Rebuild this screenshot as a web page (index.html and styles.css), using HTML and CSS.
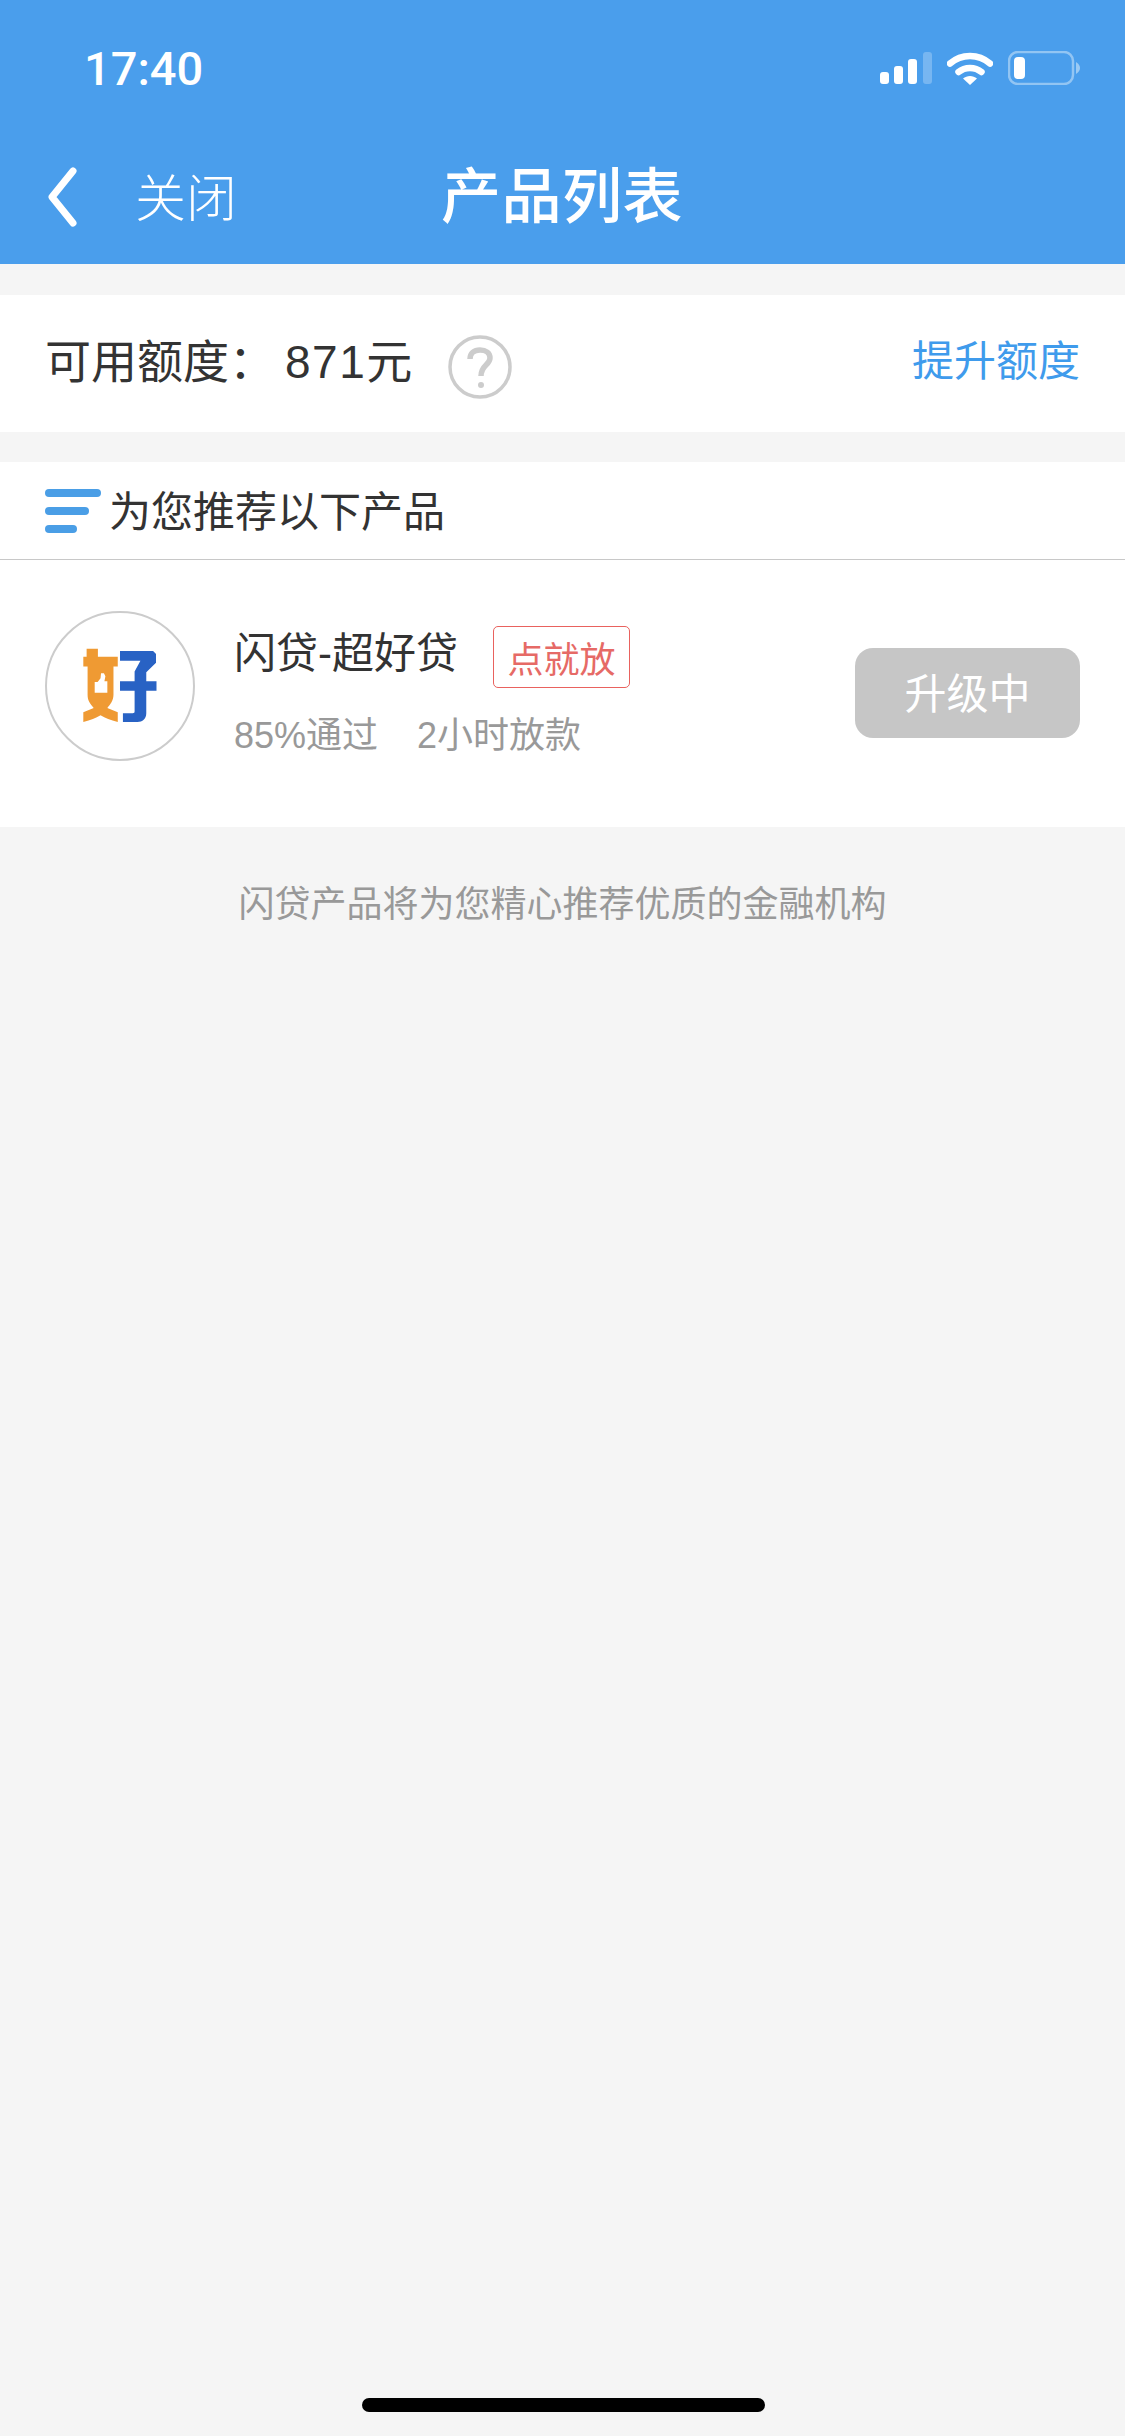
FILE: index.html
```html
<!DOCTYPE html>
<html lang="zh-CN">
<head>
    <meta charset="UTF-8">
    <meta name="viewport" content="width=device-width, initial-scale=1.0">
    <title>产品列表</title>
    <link rel="stylesheet" href="styles.css">
</head>
<body>
    <header class="top">
        <div class="status-bar">
            <span class="time">17:40</span>
            <div class="status-icons">
                <svg class="signal" width="52" height="33" viewBox="0 0 52 33">
                    <rect x="0" y="20" width="9" height="12" rx="3" fill="#fff"/>
                    <rect x="14" y="14" width="9" height="18" rx="3" fill="#fff"/>
                    <rect x="28" y="7" width="9" height="25" rx="3" fill="#fff"/>
                    <rect x="43" y="0" width="9" height="32" rx="3" fill="#fff" opacity="0.25"/>
                </svg>
                <svg class="wifi" width="46" height="34" viewBox="0 0 46 34">
                    <path d="M3 12.500C14.500 2.500 31.500 2.500 43 12.500" fill="none" stroke="#fff" stroke-width="6.500" stroke-linecap="round"/>
                    <path d="M11.500 21C18 15.500 28 15.500 34.500 21" fill="none" stroke="#fff" stroke-width="6.500" stroke-linecap="round"/>
                    <path d="M16 27.500C20 24 26 24 30 27.500L23 34Z" fill="#fff"/>
                </svg>
                <svg class="battery" width="72" height="34" viewBox="0 0 72 34">
                    <rect x="1" y="1" width="64" height="32" rx="9" fill="none" stroke="#fff" stroke-opacity="0.4" stroke-width="2.500"/>
                    <rect x="6" y="6" width="11" height="22" rx="4" fill="#fff"/>
                    <path d="M68 11C71 13 72 15 72 17C72 19 71 21 68 23Z" fill="#fff" fill-opacity="0.45"/>
                </svg>
            </div>
        </div>
        <nav class="nav-bar">
            <div class="nav-left">
                <svg class="back" width="30" height="60" viewBox="0 0 30 60">
                    <path d="M26 4L5 30L26 56" fill="none" stroke="#fff" stroke-width="7" stroke-linecap="round" stroke-linejoin="round"/>
                </svg>
                <span class="close">关闭</span>
            </div>
            <h1 class="title">产品列表</h1>
            <div></div>
        </nav>
    </header>

    <section class="quota card">
        <div class="quota-left">
            <span class="quota-text">可用额度：<span class="quota-num">871元</span></span>
            <svg class="help" width="64" height="64" viewBox="0 0 64 64">
                <circle cx="32" cy="32" r="30" fill="none" stroke="#ccc" stroke-width="3.500"/>
                <path d="M22 24C22 18 26 15 32 15C38 15 42 18 42 23C42 30 33 30 33 41" fill="none" stroke="#ccc" stroke-width="5.500"/>
                <circle cx="33" cy="50" r="3" fill="#ccc"/>
            </svg>
        </div>
        <a class="raise">提升额度</a>
    </section>

    <section class="products card">
        <div class="products-head">
            <svg class="list-icon" width="56" height="44" viewBox="0 0 56 44">
                <rect x="0" y="0" width="56" height="8" rx="4" fill="#4a9ee6"/>
                <rect x="0" y="18" width="44" height="8" rx="4" fill="#4a9ee6"/>
                <rect x="0" y="36" width="32" height="8" rx="4" fill="#4a9ee6"/>
            </svg>
            <h2 class="products-title">为您推荐以下产品</h2>
        </div>
        <div class="product">
            <div class="logo">
                <svg width="150" height="150" viewBox="0 0 150 150">
                    <path d="M40.700 36.700H52.300V45H72.700V55H68.300V84C68.300 90 65 94 62 97.500L72.700 102V112C65 110 60 108 55 105C50 108 45 110 37.300 112V102L48 97.500C44 93 41.700 90 41.700 84V55H37.300V45H40.700Z" fill="#ef9a33"/>
                    <path d="M49 71H52L55 67L55.500 62H58.500L60 65L59 70H62V82H49Z" fill="#fff"/>
                    <path d="M75 39H109L112 42V51L102 61V70H112.500V80H102V103C102 109 98 112 93 112H78V103H88C89.500 103 90 102.500 90 101V80H75V70H90V60L96 49H75Z" fill="#2862c4"/>
                </svg>
            </div>
            <div class="product-info">
                <div class="product-name-row">
                    <span class="product-name">闪贷-超好贷</span>
                    <span class="tag">点就放</span>
                </div>
                <div class="product-meta">
                    <span>85%通过</span>
                    <span>2小时放款</span>
                </div>
            </div>
            <button class="upgrade">升级中</button>
        </div>
    </section>

    <p class="note">闪贷产品将为您精心推荐优质的金融机构</p>

    <div class="home-indicator"></div>
</body>
</html>
```

FILE: styles.css
```css
* {
    box-sizing: border-box;
}

html, body {
    height: 100%;
}

body {
    margin: 0;
    background: #f5f5f5;
    color: #333;
    font-family: "Liberation Sans", "Noto Sans CJK SC", sans-serif;
    display: flex;
    flex-direction: column;
    position: relative;
}

.top {
    background: #4a9eec;
    color: #fff;
    height: 264px;
}

.status-bar {
    height: 136px;
    display: flex;
    align-items: center;
    justify-content: space-between;
    padding: 0 45px 0 84px;
}

.time {
    font-family: Roboto, sans-serif;
    font-size: 47px;
    font-weight: 500;
}

.status-icons {
    display: flex;
    align-items: center;
    gap: 15px;
}

.nav-bar {
    height: 122px;
    display: grid;
    grid-template-columns: 1fr auto 1fr;
    align-items: center;
    padding: 0 45px 0 47px;
}

.nav-left {
    display: flex;
    align-items: center;
    gap: 58px;
}

.close {
    font-size: 51px;
    font-weight: 300;
    margin-bottom: 5px;
}

.title {
    margin: 0 3px 12px 0;
    font-size: 60px;
    font-weight: 500;
    letter-spacing: 0.5px;
}

.card {
    background: #fff;
}

.quota {
    margin-top: 31px;
    height: 137px;
    display: flex;
    align-items: center;
    justify-content: space-between;
    padding: 0 45px 0 45px;
}

.quota-left {
    display: flex;
    align-items: center;
    gap: 34px;
}

.quota-text {
    font-size: 46px;
    margin-bottom: 12px;
}

.quota-num {
    letter-spacing: 1.500px;
    margin-left: 10px;
}

.help {
    margin-top: 6px;
}

.raise {
    color: #3f9bec;
    font-size: 42px;
    margin-bottom: 12px;
}

.products {
    margin-top: 30px;
}

.products-head {
    height: 98px;
    display: flex;
    align-items: center;
    gap: 8px;
    padding-left: 45px;
    border-bottom: 1px solid #c8c8c8;
}

.products-title {
    margin: 0 0 5px;
    font-size: 42px;
    font-weight: 400;
}

.product {
    height: 267px;
    display: flex;
    align-items: center;
    padding: 0 45px;
}

.logo {
    width: 150px;
    height: 150px;
    border: 2px solid #ccc;
    border-radius: 50%;
    overflow: hidden;
    flex: none;
    margin-top: -16px;
    display: flex;
    align-items: center;
    justify-content: center;
}

.product-info {
    flex: 1;
    margin-left: 39px;
    margin-top: -10px;
}

.product-name-row {
    display: flex;
    align-items: center;
    gap: 35px;
}

.product-name {
    font-size: 42px;
    margin-bottom: 10px;
}

.tag {
    width: 137px;
    height: 62px;
    margin-top: 4px;
    border: 1px solid #e9625e;
    border-radius: 5px;
    color: #e66a66;
    font-size: 36px;
    display: flex;
    align-items: center;
    justify-content: center;
}

.product-meta {
    display: flex;
    gap: 39px;
    margin-top: 16px;
    color: #999;
    font-size: 36px;
}

.upgrade {
    width: 225px;
    height: 90px;
    border: none;
    border-radius: 18px;
    background: #c6c6c6;
    color: #fff;
    font-family: inherit;
    font-size: 42px;
    padding-bottom: 6px;
    margin-top: -2px;
}

.note {
    margin: 48px 0 0;
    text-align: center;
    color: #999;
    font-size: 36px;
}

.home-indicator {
    position: absolute;
    left: 362px;
    bottom: 24px;
    width: 403px;
    height: 14px;
    border-radius: 7px;
    background: #000;
}
```
